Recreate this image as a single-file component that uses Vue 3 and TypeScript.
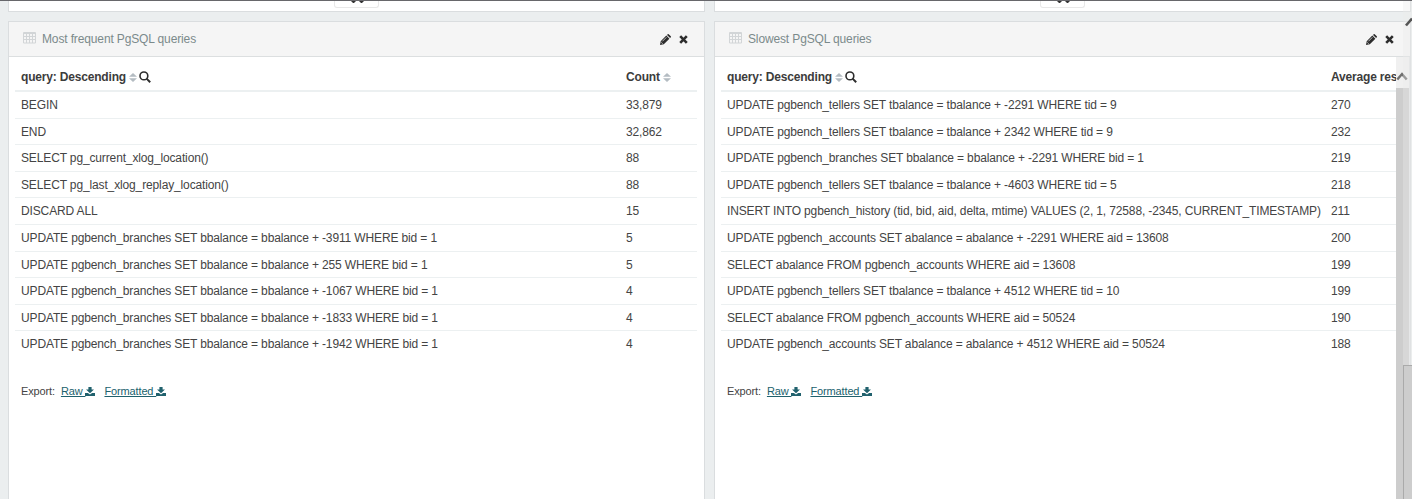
<script setup lang="ts">
interface Row { query: string; value: string }
interface Panel { title: string; metric: string; rows: Row[]; scroll: boolean }

const update = (table: string, delta: string, key: string, id: number) => {
  const column = table === 'branches' ? 'bbalance' : table === 'tellers' ? 'tbalance' : 'abalance'
  return `UPDATE pgbench_${table} SET ${column} = ${column} + ${delta} WHERE ${key} = ${id}`
}

const panels: Panel[] = [
  {
    title: 'Most frequent PgSQL queries',
    metric: 'Count',
    scroll: false,
    rows: [
      { query: 'BEGIN', value: '33,879' },
      { query: 'END', value: '32,862' },
      { query: 'SELECT pg_current_xlog_location()', value: '88' },
      { query: 'SELECT pg_last_xlog_replay_location()', value: '88' },
      { query: 'DISCARD ALL', value: '15' },
      { query: update('branches', '-3911', 'bid', 1), value: '5' },
      { query: update('branches', '255', 'bid', 1), value: '5' },
      { query: update('branches', '-1067', 'bid', 1), value: '4' },
      { query: update('branches', '-1833', 'bid', 1), value: '4' },
      { query: update('branches', '-1942', 'bid', 1), value: '4' },
    ],
  },
  {
    title: 'Slowest PgSQL queries',
    metric: 'Average res',
    scroll: true,
    rows: [
      { query: update('tellers', '-2291', 'tid', 9), value: '270' },
      { query: update('tellers', '2342', 'tid', 9), value: '232' },
      { query: update('branches', '-2291', 'bid', 1), value: '219' },
      { query: update('tellers', '-4603', 'tid', 5), value: '218' },
      { query: 'INSERT INTO pgbench_history (tid, bid, aid, delta, mtime) VALUES (2, 1, 72588, -2345, CURRENT_TIMESTAMP)', value: '211' },
      { query: update('accounts', '-2291', 'aid', 13608), value: '200' },
      { query: 'SELECT abalance FROM pgbench_accounts WHERE aid = 13608', value: '199' },
      { query: update('tellers', '4512', 'tid', 10), value: '199' },
      { query: 'SELECT abalance FROM pgbench_accounts WHERE aid = 50524', value: '190' },
      { query: update('accounts', '4512', 'aid', 50524), value: '188' },
    ],
  },
]
</script>

<template>
  <div class="dashboard">
    <div v-for="panel in panels" :key="panel.title" class="column" :class="{ scrolled: panel.scroll }">
      <div class="previous">
        <div class="toggle">
          <svg width="14" height="3" viewBox="0 0 14 3"><path d="M0 0h5l-2 2h-1zM8 0h5l-2 2h-1z" fill="#333" /></svg>
        </div>
      </div>
      <section class="panel">
        <header class="heading">
          <svg class="grid" width="13" height="12" viewBox="0 0 13 12">
            <path d="M.5 .5h12v10.5h-12zM.5 1.5h12M.5 4.5h12M.5 7.5h12M3.5 1v10M6.5 1v10M9.5 1v10" fill="none" stroke="#d2d5d7" />
          </svg>
          <span class="title">{{ panel.title }}</span>
          <svg class="pencil" width="11" height="11" viewBox="0 0 11 11">
            <path d="M0 11l.7-3.8L6.3 1.6l3.1 3.1-5.6 5.6zM7 .9L7.7.2q.5-.4 1 0l2.1 2.1q.4.5 0 1l-.7.7z" fill="#2d2d2d" />
            <path d="M1.2 8.3l1.5 1.5M2.4 7.3l4-4" stroke="#f5f5f5" stroke-width=".7" />
          </svg>
          <svg class="close" width="9" height="9" viewBox="0 0 9 9"><path d="M1.2 1.2l6.6 6.6M7.8 1.2L1.2 7.8" stroke="#2d2d2d" stroke-width="2.6" /></svg>
        </header>
        <div class="content">
          <div class="viewport">
            <div class="row head">
              <div class="query">
                <span class="label">query: Descending</span>
                <svg class="sort" width="8" height="9" viewBox="0 0 8 9"><path d="M0 3.8L4 0l4 3.8zM0 5.2h8L4 9z" fill="#b4bcc2" /></svg>
                <svg class="search" width="12" height="12" viewBox="0 0 12 12"><circle cx="4.9" cy="4.9" r="3.9" fill="none" stroke="#2d2d2d" stroke-width="1.6" /><path d="M7.6 7.6l3.6 3.6" stroke="#2d2d2d" stroke-width="2" /></svg>
              </div>
              <div class="metric">
                <span>{{ panel.metric }}</span>
                <svg v-if="!panel.scroll" class="sort" width="8" height="9" viewBox="0 0 8 9"><path d="M0 3.8L4 0l4 3.8zM0 5.2h8L4 9z" fill="#b4bcc2" /></svg>
              </div>
            </div>
            <div v-for="(row, i) in panel.rows" :key="i" class="row">
              <div class="query">{{ row.query }}</div>
              <div class="metric">{{ row.value }}</div>
            </div>
            <div class="export">
              <span class="caption">Export:</span>
              <a v-for="kind in ['Raw', 'Formatted']" :key="kind"><span class="link">{{ kind }}&nbsp;</span><svg width="10" height="9" viewBox="0 0 10 9"><path d="M3.4 0h3.2v2.6h2.4L5 6.3 1 2.6h2.4zM0 6h2.9L5 7.6 7.1 6H10v3H0z" fill="#20616d" /></svg></a>
            </div>
          </div>
          <div v-if="panel.scroll" class="scrollbar">
            <div class="arrow"><svg width="12" height="10" viewBox="0 0 12 10"><path d="M1.3 8.6L6 3l4.7 5.6" fill="none" stroke="#707070" stroke-width="2.4" /></svg></div>
            <div class="thumb"></div>
          </div>
        </div>
      </section>
    </div>
    <div class="page-scroll">
      <svg width="9" height="12" viewBox="0 0 9 12"><path d="M3 10.5l6-7" stroke="#555" stroke-width="2.6" /></svg>
      <div class="page-thumb"></div>
    </div>
  </div>
</template>

<style>
body { overflow: hidden; }
</style>

<style scoped>
* { box-sizing: border-box; }
.dashboard {
  position: relative;
  display: flex;
  gap: 9px;
  width: 1412px;
  height: 499px;
  padding-left: 8px;
  overflow: hidden;
  background: #ebeeef;
  border-top: 1px solid #67676b;
  font: 12px/17px "Liberation Sans", Arial, sans-serif;
  letter-spacing: -0.135px;
  color: #444;
}
svg { display: block; flex: none; }
.column { width: 697px; flex: none; display: flex; flex-direction: column; }
.previous {
  height: 11px;
  flex: none;
  margin-bottom: 9px;
  background: #fff;
  border: 1px solid #dadddf;
  border-top: 0;
}
.toggle {
  width: 45px;
  height: 7px;
  margin-left: 325px;
  border: 1px solid #e8e8e8;
  border-top: 0;
  border-radius: 0 0 3px 3px;
}
.toggle svg { margin-left: 16px; }
.panel {
  flex: 1;
  display: flex;
  flex-direction: column;
  background: #fff;
  border: 1px solid #dadddf;
  border-bottom: 0;
}
.heading {
  height: 35px;
  flex: none;
  display: flex;
  align-items: center;
  padding: 0 16px 0 14px;
  background: #f5f5f5;
  border-bottom: 1px solid #dcdfe0;
  color: #7b8a8b;
}
.grid { margin-bottom: 2px; }
.title { flex: 1; margin-left: 6px; }
.close { margin-left: 8px; }
.content { flex: 1; display: flex; min-height: 0; }
.viewport { flex: 1; min-width: 0; padding: 7px 7px 0 6px; overflow: hidden; }
.scrolled .viewport { padding-right: 0; }
.row {
  height: 26.6px;
  display: flex;
  align-items: center;
  padding: 1.4px 0 0 6px;
  border-top: 1px solid #ecf0f1;
  white-space: nowrap;
}
.row.head { height: 26px; padding-top: 0; border-top: 0; font-weight: bold; color: #3c3c3c; letter-spacing: -0.18px; }
.row.head + .row { border-top: 2px solid #ecf0f1; height: 27.6px; }
.query { width: 605px; flex: none; display: flex; align-items: center; }
.scrolled .query { width: 604px; }
.metric { display: flex; align-items: center; }
.sort { margin-left: 3px; }
.search { margin-left: 2px; }
.export { display: flex; margin: 26px 0 0 6px; font-size: 11px; line-height: 17px; white-space: nowrap; }
.caption { margin-right: 6px; }
a { display: flex; align-items: center; margin-right: 9px; color: #20616d; }
.link { text-decoration: underline; text-decoration-skip-ink: none; text-underline-offset: 1px; }
.scrollbar { width: 14px; flex: none; background: #f0f0f0; border-right: 1px solid #e3e5e6; }
.arrow { height: 31px; padding: 14px 0 0 0; }
.thumb { height: 412px; background: #cdcdcd; }
.page-scroll {
  position: absolute;
  top: 0;
  right: 0;
  width: 9px;
  height: 498px;
  padding-top: 14px;
  background: rgba(235, 236, 236, 0.35);
}
.page-thumb { height: 140px; margin-top: 338px; background: #cdcdcd; border: 1px solid #aaa; border-right: 0; }
</style>
